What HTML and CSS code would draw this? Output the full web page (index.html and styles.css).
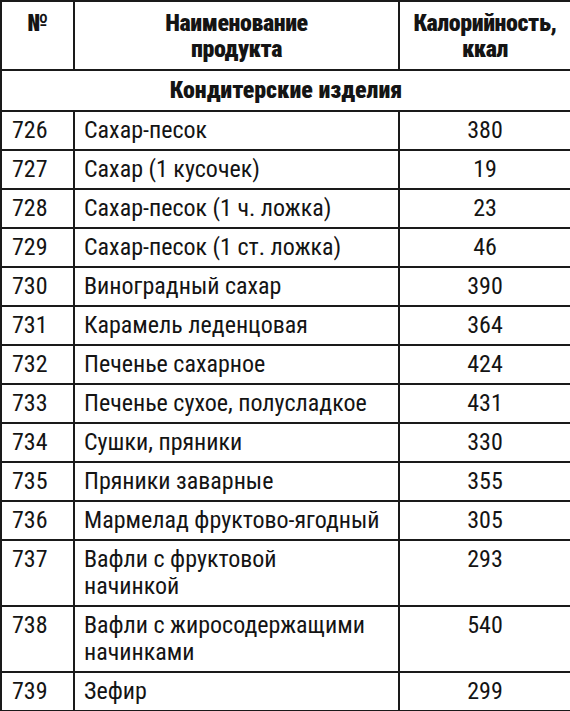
FILE: index.html
```html
<!DOCTYPE html>
<html lang="ru"><head><meta charset="utf-8"><link rel="stylesheet" href="styles.css"></head>
<body>
<table class="tbl">
  <colgroup><col class="c-num"><col class="c-name"><col class="c-kcal"></colgroup>
  <thead>
    <tr class="head">
      <th>№</th>
      <th>Наименование<br>продукта</th>
      <th>Калорийность,<br>ккал</th>
    </tr>
  </thead>
  <tbody>
    <tr class="section"><td colspan="3">Кондитерские изделия</td></tr>
    <tr><td>726</td><td>Сахар-песок</td><td>380</td></tr>
    <tr><td>727</td><td>Сахар (1 кусочек)</td><td>19</td></tr>
    <tr><td>728</td><td>Сахар-песок (1 ч. ложка)</td><td>23</td></tr>
    <tr><td>729</td><td>Сахар-песок (1 ст. ложка)</td><td>46</td></tr>
    <tr><td>730</td><td>Виноградный сахар</td><td>390</td></tr>
    <tr><td>731</td><td>Карамель леденцовая</td><td>364</td></tr>
    <tr><td>732</td><td>Печенье сахарное</td><td>424</td></tr>
    <tr><td>733</td><td>Печенье сухое, полусладкое</td><td>431</td></tr>
    <tr><td>734</td><td>Сушки, пряники</td><td>330</td></tr>
    <tr><td>735</td><td>Пряники заварные</td><td>355</td></tr>
    <tr><td>736</td><td>Мармелад фруктово-ягодный</td><td>305</td></tr>
    <tr><td>737</td><td>Вафли с фруктовой<br>начинкой</td><td>293</td></tr>
    <tr><td>738</td><td>Вафли с жиросодержащими<br>начинками</td><td>540</td></tr>
    <tr><td>739</td><td>Зефир</td><td>299</td></tr>
  </tbody>
</table>
</body></html>
```
FILE: styles.css
```css
html, body { margin: 0; padding: 0; background: #fff; }
body {
  font-family: Roboto, "Liberation Sans", sans-serif;
  font-stretch: condensed;
  color: #141414;
}
.tbl {
  border-collapse: collapse;
  width: 570px;
  table-layout: fixed;
}
.c-num { width: 73px; }
.c-name { width: 325px; }
.c-kcal { width: 172px; }
.tbl th, .tbl td {
  border: 2px solid #1a1a1a;
  vertical-align: top;
}
.tbl td {
  font-size: 24px;
  line-height: 27px;
  padding: 5px 6px 5px 10px;
}
.tbl td:nth-child(2) { padding-left: 9px; }
.tbl td:nth-child(3) { text-align: center; padding-left: 6px; }
.tbl th {
  font-size: 24px;
  font-weight: 900;
  letter-spacing: -0.4px;
  line-height: 26px;
  padding: 8px 4px 7px;
  text-align: center;
}
.section td {
  font-weight: 900;
  font-size: 24px;
  text-align: center;
  padding: 7px 6px 8px;
  line-height: 24px;
}
```
